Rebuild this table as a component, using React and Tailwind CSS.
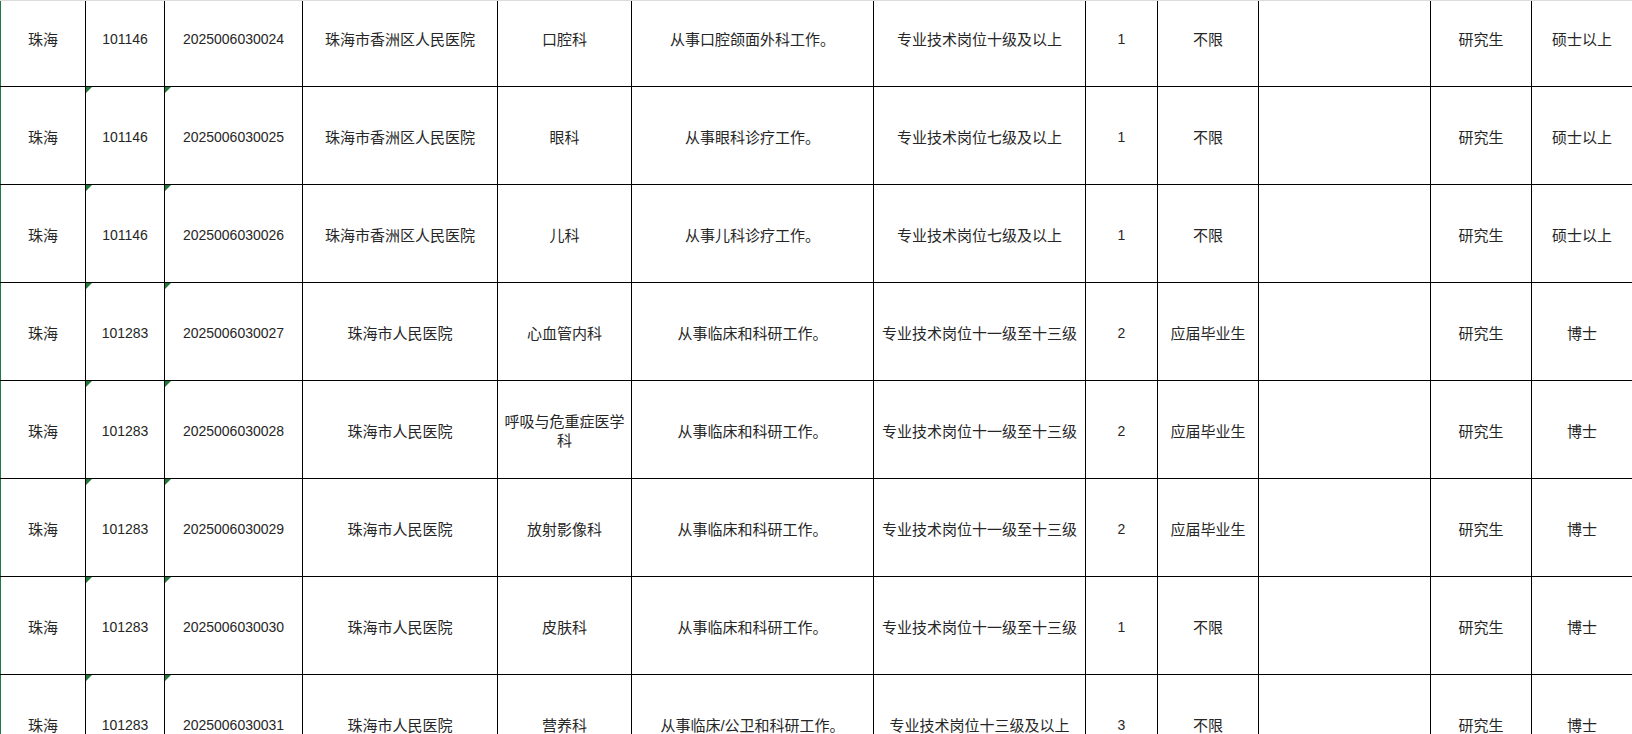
import React from 'react';

const widths = [85, 79, 138, 195, 134, 242, 212, 72, 101, 172, 101, 101];

const rows = [
  ['珠海', '101146', '2025006030024', '珠海市香洲区人民医院', '口腔科', '从事口腔颌面外科工作。', '专业技术岗位十级及以上', '1', '不限', '', '研究生', '硕士以上'],
  ['珠海', '101146', '2025006030025', '珠海市香洲区人民医院', '眼科', '从事眼科诊疗工作。', '专业技术岗位七级及以上', '1', '不限', '', '研究生', '硕士以上'],
  ['珠海', '101146', '2025006030026', '珠海市香洲区人民医院', '儿科', '从事儿科诊疗工作。', '专业技术岗位七级及以上', '1', '不限', '', '研究生', '硕士以上'],
  ['珠海', '101283', '2025006030027', '珠海市人民医院', '心血管内科', '从事临床和科研工作。', '专业技术岗位十一级至十三级', '2', '应届毕业生', '', '研究生', '博士'],
  ['珠海', '101283', '2025006030028', '珠海市人民医院', '呼吸与危重症医学科', '从事临床和科研工作。', '专业技术岗位十一级至十三级', '2', '应届毕业生', '', '研究生', '博士'],
  ['珠海', '101283', '2025006030029', '珠海市人民医院', '放射影像科', '从事临床和科研工作。', '专业技术岗位十一级至十三级', '2', '应届毕业生', '', '研究生', '博士'],
  ['珠海', '101283', '2025006030030', '珠海市人民医院', '皮肤科', '从事临床和科研工作。', '专业技术岗位十一级至十三级', '1', '不限', '', '研究生', '博士'],
  ['珠海', '101283', '2025006030031', '珠海市人民医院', '营养科', '从事临床/公卫和科研工作。', '专业技术岗位十三级及以上', '3', '不限', '', '研究生', '博士'],
];

// columns stored as text get the little green corner marker
const flagged = [1, 2];
const numeric = [1, 2, 7];

export default function App() {
  return (
    <div className="relative w-[1632px] h-[734px] overflow-hidden bg-white font-['Liberation_Sans','Noto_Sans_CJK_SC',sans-serif] text-[#262626]">
      <div className="relative z-10 h-px bg-[#dcdcdc]" />
      <table className="-mt-[13px] table-fixed border-collapse border-l border-l-[#1d7a46] border-r border-r-[#1d7a46] w-[1632px]">
        <colgroup>
          {widths.map((w, i) => (
            <col key={i} style={{ width: w }} />
          ))}
        </colgroup>
        <tbody>
          {rows.map((row, r) => (
            <tr key={r} className="h-[98px]">
              {row.map((cell, c) => (
                <td
                  key={c}
                  className={`relative border border-black px-1 pt-[3px] text-center align-middle leading-[19px] ${
                    numeric.includes(c) ? 'text-[14px]' : 'text-[15px]'
                  } ${c === 0 ? 'border-l-[#1d7a46]' : ''} ${c === 11 ? 'border-r-[#1d7a46]' : ''}`}
                >
                  {flagged.includes(c) && (
                    <span className="absolute left-0 top-0 h-0 w-0 border-t-[6px] border-r-[6px] border-t-[#1f7a3a] border-r-transparent" />
                  )}
                  {cell}
                </td>
              ))}
            </tr>
          ))}
        </tbody>
      </table>
    </div>
  );
}
